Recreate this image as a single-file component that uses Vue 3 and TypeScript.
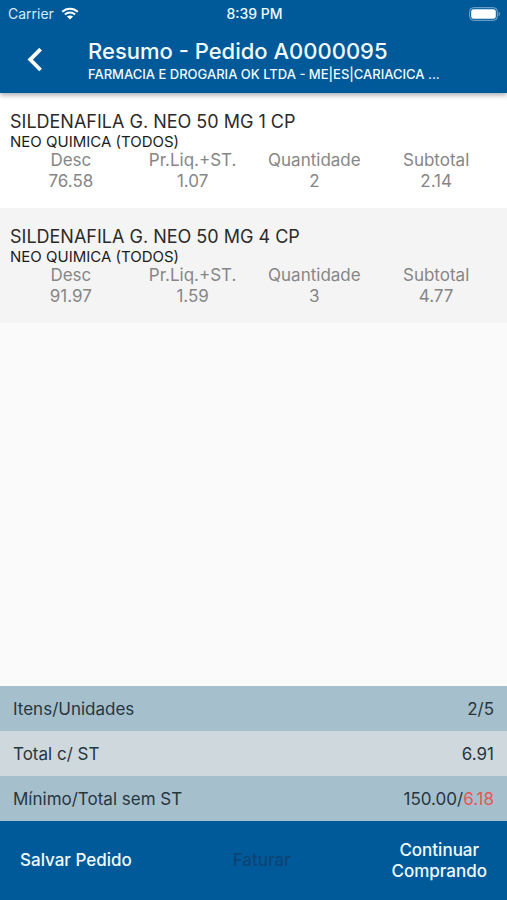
<script setup lang="ts">
interface OrderItem {
  name: string
  brand: string
  fields: { label: string; value: string }[]
}

const makeItem = (
  name: string,
  discount: string,
  price: string,
  quantity: string,
  subtotal: string,
): OrderItem => ({
  name,
  brand: 'NEO QUIMICA (TODOS)',
  fields: [
    { label: 'Desc', value: discount },
    { label: 'Pr.Liq.+ST.', value: price },
    { label: 'Quantidade', value: quantity },
    { label: 'Subtotal', value: subtotal },
  ],
})

const items: OrderItem[] = [
  makeItem('SILDENAFILA G. NEO 50 MG 1 CP', '76.58', '1.07', '2', '2.14'),
  makeItem('SILDENAFILA G. NEO 50 MG 4 CP', '91.97', '1.59', '3', '4.77'),
]
</script>

<template>
  <div class="screen">
    <header class="header">
      <div class="status">
        <div class="carrier">
          <span>Carrier</span>
          <svg class="wifi" viewBox="0 0 18 13" aria-hidden="true">
            <path d="M1.2 4.7C5.6.6 12.4.6 16.8 4.7" />
            <path d="M3.9 7.5c2.9-2.7 7.3-2.7 10.2 0" />
            <path class="dot" d="M9 12.6 5.9 9.5c1.8-1.5 4.4-1.5 6.2 0z" />
          </svg>
        </div>
        <span class="clock">8:39 PM</span>
        <svg class="battery" viewBox="0 0 32 14" aria-hidden="true">
          <rect class="shell" x="0.7" y="0.7" width="27.6" height="12.6" rx="3.6" />
          <rect class="level" x="2.2" y="2.2" width="24.6" height="9.6" rx="2.2" />
          <path class="tip" d="M29.7 4.8c1.7.7 1.7 3.7 0 4.4z" />
        </svg>
      </div>
      <div class="toolbar">
        <button class="back" type="button" aria-label="Voltar">
          <svg viewBox="0 0 16 26" aria-hidden="true">
            <path d="M13.6 2.2 3.2 12.6l10.4 10.4" />
          </svg>
        </button>
        <div class="heading">
          <h1>Resumo - Pedido A0000095</h1>
          <p>FARMACIA E DROGARIA OK LTDA - ME|ES|CARIACICA ...</p>
        </div>
      </div>
    </header>

    <main class="items">
      <article v-for="item in items" :key="item.name" class="item">
        <h2>{{ item.name }}</h2>
        <p class="brand">{{ item.brand }}</p>
        <dl class="fields">
          <div v-for="field in item.fields" :key="field.label">
            <dt>{{ field.label }}</dt>
            <dd>{{ field.value }}</dd>
          </div>
        </dl>
      </article>
    </main>

    <dl class="totals">
      <div class="total">
        <dt>Itens/Unidades</dt>
        <dd>2/5</dd>
      </div>
      <div class="total">
        <dt>Total c/ ST</dt>
        <dd>6.91</dd>
      </div>
      <div class="total">
        <dt>Mínimo/Total sem ST</dt>
        <dd>150.00/<span class="below">6.18</span></dd>
      </div>
    </dl>

    <footer class="actions">
      <button type="button">Salvar Pedido</button>
      <button type="button" disabled>Faturar</button>
      <button class="continue" type="button">Continuar Comprando</button>
    </footer>
  </div>
</template>

<style>
body {
  margin: 0;
}
</style>

<style scoped>
.screen {
  display: flex;
  flex-direction: column;
  min-height: 100vh;
  background: #fafafa;
  color: #2b2b2b;
  font-family: Inter, "Liberation Sans", sans-serif;
}

h1,
h2,
p,
dl,
dd {
  margin: 0;
  font-weight: 400;
}

button {
  padding: 0;
  border: 0;
  background: none;
  color: inherit;
  font: inherit;
}

.header {
  position: relative;
  background: #005a9a;
  color: #f0faff;
  box-shadow: 0 2px 5px rgba(0, 0, 0, 0.35);
}

.status {
  display: grid;
  grid-template-columns: 1fr auto 1fr;
  align-items: center;
  height: 27px;
  padding: 0 6px 0 8px;
  font-size: 14px;
}

.carrier {
  display: flex;
  align-items: center;
  gap: 7px;
  color: #d5ebf8;
}

.wifi {
  width: 18px;
  height: 13px;
  fill: none;
  stroke: #fff;
  stroke-width: 2;
}

.wifi .dot {
  fill: #fff;
  stroke: none;
}

.clock {
  font-weight: 500;
}

.battery {
  justify-self: end;
  width: 32px;
  height: 14px;
}

.shell {
  fill: none;
  stroke: #7fadcf;
  stroke-width: 1;
}

.level {
  fill: #fff;
}

.tip {
  fill: #7fadcf;
}

.toolbar {
  display: flex;
  height: 66px;
}

.back {
  display: grid;
  flex: 0 0 70px;
  place-items: center;
}

.back svg {
  width: 16px;
  height: 26px;
  fill: none;
  stroke: #fff;
  stroke-width: 3.8;
}

.heading {
  flex: 1;
  min-width: 0;
  padding: 10px 18px 0;
}

.heading h1 {
  font-size: 22px;
  font-weight: 500;
  line-height: 28px;
}

.heading p {
  overflow: hidden;
  font-size: 13px;
  font-weight: 500;
  line-height: 18px;
  white-space: nowrap;
}

.items {
  flex: 1;
}

.item {
  padding: 18px 10px 16px;
  background: #fff;
}

.item:nth-child(even) {
  background: #f4f4f4;
}

.item h2 {
  font-size: 18px;
  line-height: 22px;
}

.brand {
  color: #1c1c1c;
  font-size: 15px;
  line-height: 17px;
}

.fields {
  display: grid;
  grid-template-columns: repeat(4, 1fr);
  color: #868686;
  font-size: 17px;
  line-height: 21px;
  text-align: center;
}

.total {
  display: flex;
  align-items: center;
  justify-content: space-between;
  height: 45px;
  padding: 0 13px;
  background: #a6bfcd;
  color: #263640;
  font-size: 17px;
}

.total:nth-child(even) {
  background: #cfd8dd;
}

.below {
  color: #e85555;
}

.actions {
  display: flex;
  align-items: center;
  justify-content: space-between;
  height: 79px;
  padding: 0 20px;
  background: #005a9a;
  color: #f0faff;
  font-size: 17px;
  font-weight: 500;
  line-height: 21px;
}

.actions button:disabled {
  color: #0b4475;
}

.actions .continue {
  width: min-content;
}
</style>
